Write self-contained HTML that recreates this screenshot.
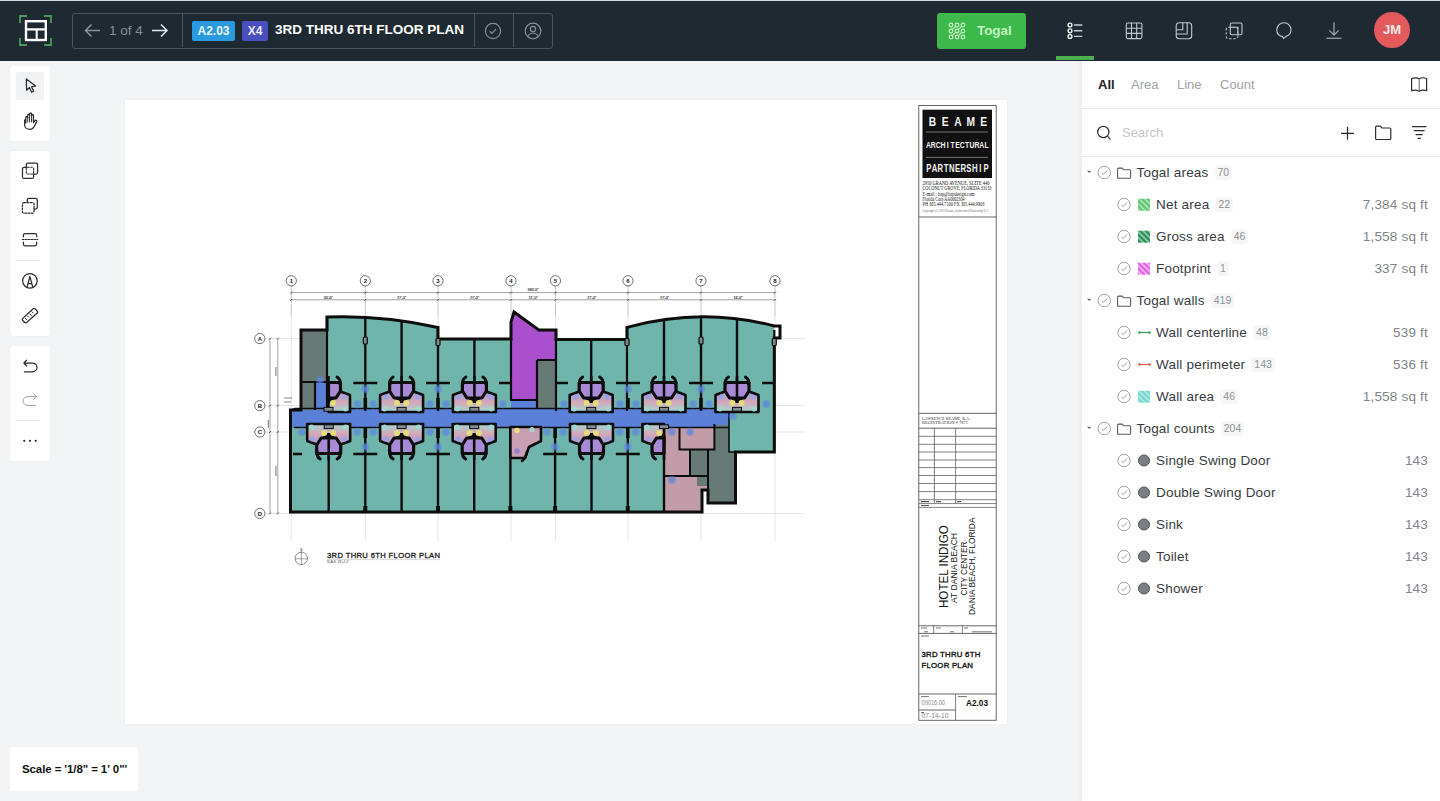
<!DOCTYPE html>
<html><head><meta charset="utf-8">
<style>
*{box-sizing:border-box;margin:0;padding:0}
html,body{width:1440px;height:801px;overflow:hidden;background:#f3f4f6;font-family:"Liberation Sans",sans-serif;position:relative}
.abs{position:absolute}
#top{position:absolute;left:0;top:0;width:1440px;height:61px;background:#1e2931}
#panel{position:absolute;left:1082px;top:61px;width:358px;height:740px;background:#fff;box-shadow:-3px 0 6px rgba(20,30,50,0.035)}
.tb{position:absolute;left:10px;width:40px;background:#fff;border-radius:3px;box-shadow:0 0 2px rgba(0,0,0,0.06)}
#paper{position:absolute;left:125px;top:100px;width:882px;height:624px;background:#fff;box-shadow:0 0 3px rgba(0,0,0,0.04)}
#scale{position:absolute;left:10px;top:747px;width:128px;height:44px;background:#fff;border-radius:3px;font-size:11.5px;font-weight:bold;color:#111;padding:16px 0 0 12px;letter-spacing:-0.1px}
.tab{top:77px;font-size:13px;color:#9ea2a7;line-height:16px}
.pt{position:absolute;font-size:13.5px;letter-spacing:0.2px;color:#383b40;line-height:17px;white-space:nowrap}
.bd{display:inline-block;margin-left:6px;font-size:10.5px;letter-spacing:0;color:#8d9196;background:#f6f6f7;border-radius:4px;padding:0 3px;line-height:15px;vertical-align:1px}
.pv{position:absolute;right:12px;font-size:13.5px;letter-spacing:0.2px;color:#7f8388;line-height:17px;white-space:nowrap}
</style></head><body>
<div id="top"><div class="abs" style="left:0;top:0;width:1440px;height:1px;background:#cfd9e3"></div>
<svg class="abs" style="left:0;top:0" width="70" height="61" viewBox="0 0 70 61">
<g stroke="#4b9a5c" stroke-width="1.8" fill="none">
<path d="M20 23V16H27"/><path d="M44 16H51V23"/><path d="M20 38V45H27"/><path d="M44 45H51V38"/>
</g>
<rect x="26" y="21.2" width="19.8" height="18.8" fill="none" stroke="#fff" stroke-width="2.4"/>
<path d="M27 29.4H44.8M36.7 29V40" stroke="#fff" stroke-width="2.1"/>
</svg>
<div class="abs" style="left:72px;top:13px;width:481px;height:35.5px;border:1px solid #4a5359;border-radius:3px"></div>
<div class="abs" style="left:182px;top:13px;width:1px;height:34px;background:#4a5359"></div>
<div class="abs" style="left:474px;top:13px;width:1px;height:34px;background:#4a5359"></div>
<div class="abs" style="left:513px;top:13px;width:1px;height:34px;background:#4a5359"></div>
<svg class="abs" style="left:84px;top:22px" width="90" height="18" viewBox="0 0 90 18">
<path d="M1.5 8.5H16M7.5 2.5L1.5 8.5L7.5 14.5" stroke="#8c949a" stroke-width="1.5" fill="none"/>
<path d="M68 8.5H83M77 2.5L83 8.5L77 14.5" stroke="#e6e9eb" stroke-width="1.5" fill="none"/>
</svg>
<div class="abs" style="left:109px;top:22px;font-size:13.5px;color:#868e94;line-height:17px">1 of 4</div>
<div class="abs" style="left:192px;top:21px;width:43px;height:20px;background:#2a9ae0;border-radius:2px;color:#e8f4fc;font-size:12px;font-weight:bold;text-align:center;line-height:20px">A2.03</div>
<div class="abs" style="left:242px;top:21px;width:26px;height:20px;background:#4a4fc0;border-radius:2px;color:#e8e8f8;font-size:12px;font-weight:bold;text-align:center;line-height:20px">X4</div>
<div class="abs" style="left:275px;top:20px;font-size:13.5px;font-weight:bold;color:#fff;line-height:20px;letter-spacing:0px">3RD THRU 6TH FLOOR PLAN</div>
<svg class="abs" style="left:483px;top:21px" width="20" height="20" viewBox="0 0 20 20">
<circle cx="10" cy="10" r="7.6" stroke="#878e94" stroke-width="1.2" fill="none"/>
<path d="M6.8 10.2L9 12.3L13.2 7.8" stroke="#878e94" stroke-width="1.2" fill="none"/>
</svg>
<svg class="abs" style="left:523px;top:21px" width="20" height="20" viewBox="0 0 20 20">
<circle cx="10" cy="10" r="7.8" stroke="#878e94" stroke-width="1.2" fill="none"/>
<circle cx="10" cy="8" r="2.6" stroke="#878e94" stroke-width="1.2" fill="none"/>
<path d="M4.8 15.5C6 13 8 12 10 12S14 13 15.2 15.5" stroke="#878e94" stroke-width="1.2" fill="none"/>
</svg>
<div class="abs" style="left:937px;top:13px;width:89px;height:36px;background:#3db84a;border-radius:3px"></div>
<svg class="abs" style="left:947px;top:21px" width="20" height="20" viewBox="0 0 20 20">
<g stroke="#c6f4c8" stroke-width="1.2" fill="none">
<circle cx="4" cy="4" r="1.8"/><circle cx="10" cy="4" r="1.8"/><circle cx="16" cy="4" r="1.8"/>
<circle cx="4" cy="10" r="1.8"/><circle cx="10" cy="10" r="1.8"/><circle cx="16" cy="10" r="1.8"/>
<circle cx="4" cy="16" r="1.8"/><circle cx="10" cy="16" r="1.8"/><circle cx="16" cy="16" r="1.8"/>
<path d="M5.3 8.7L8.7 5.3M11.3 8.7L14.7 5.3M5.3 14.7L8.7 11.3M11.3 14.7L14.7 11.3"/>
</g>
</svg>
<div class="abs" style="left:977px;top:20.5px;font-size:13.4px;font-weight:bold;color:#c2f4c4;line-height:20px">Togal</div>
<svg class="abs" style="left:1062px;top:18px" width="26" height="26" viewBox="1062 18 26 26">
<g stroke="#f2f4f5" stroke-width="1.4" fill="none">
<circle cx="1070" cy="25" r="1.9"/><circle cx="1070" cy="30.8" r="1.9"/><circle cx="1070" cy="36.4" r="1.9"/>
</g>
<path d="M1074 25H1082.3M1074 30.8H1082.3M1074 36.4H1082.3" stroke="#c9cdd0" stroke-width="1.4"/>
</svg>
<div class="abs" style="left:1056px;top:56px;width:38px;height:4px;background:#4caf50"></div>
<svg class="abs" style="left:1120px;top:18px" width="28" height="26" viewBox="1120 18 28 26">
<g stroke="#c4c8cc" stroke-width="1.1" fill="none">
<rect x="1126.3" y="23" width="15.6" height="15.6" rx="1.5"/><path d="M1131.5 23V38.6M1136.7 23V38.6M1126.3 28.2H1141.9M1126.3 33.4H1141.9"/>
</g></svg>
<svg class="abs" style="left:1170px;top:18px" width="28" height="26" viewBox="1170 18 28 26">
<g stroke="#c4c8cc" stroke-width="1.1" fill="none">
<rect x="1176.2" y="22.8" width="15.5" height="16" rx="3"/><path d="M1182.8 22.8V29.7H1176.2M1187.2 22.8V34H1176.2"/>
</g></svg>
<svg class="abs" style="left:1220px;top:18px" width="28" height="26" viewBox="1220 18 28 26">
<g stroke="#c4c8cc" stroke-width="1.1" fill="none">
<rect x="1230.3" y="23" width="11.7" height="11.7" rx="1.5"/><rect x="1226.2" y="27.3" width="11.7" height="11.5" rx="2" stroke-dasharray="2.4 1.8"/><path d="M1230.3 27.3H1237.9V34.7"/>
</g></svg>
<svg class="abs" style="left:1270px;top:18px" width="28" height="26" viewBox="1270 18 28 26">
<path d="M1284 22.8C1288 22.8 1291 25.8 1291 29.8C1291 33 1289 35.5 1286.3 36.3L1283.5 38.5L1282.5 36.6C1279 36 1276.8 33.3 1276.8 29.8C1276.8 25.8 1280 22.8 1284 22.8Z" stroke="#c4c8cc" stroke-width="1.1" fill="none"/>
</svg>
<svg class="abs" style="left:1320px;top:18px" width="28" height="26" viewBox="1320 18 28 26">
<g stroke="#9aa2a7" stroke-width="1.3" fill="none">
<path d="M1334 22.2V35M1329.3 30.4L1334 35L1338.8 30.4"/><path d="M1326.4 38.3H1341.4"/>
</g></svg>
<div class="abs" style="left:1374px;top:12px;width:36px;height:36px;border-radius:50%;background:#e25a5c;color:#fde8e8;font-size:13px;font-weight:bold;text-align:center;line-height:36px">JM</div>
</div>
<div id="paper"></div>
<!--PLAN--><svg class="abs" style="left:125px;top:99px" width="882" height="625" viewBox="125 99 882 625">
<defs>
<linearGradient id="podg" x1="0" y1="0" x2="0" y2="1"><stop offset="0" stop-color="#9c9ee0"/><stop offset="0.5" stop-color="#d6a6b6"/><stop offset="1" stop-color="#a6d6d0"/></linearGradient>
<linearGradient id="podl" x1="0" y1="1" x2="0" y2="0"><stop offset="0" stop-color="#9c9ee0"/><stop offset="0.5" stop-color="#d6a6b6"/><stop offset="1" stop-color="#a6d6d0"/></linearGradient>
<clipPath id="bld"><path d="M301 410V330H327V317Q383 315 438 327.5V339H511V322L514 312L538.8 330H556V339.5H627V327.4Q701 307 774.3 326H780V338H774.3V452H735.5V503H708V490H702V512H290.5V410Z"/></clipPath>
<radialGradient id="bdot"><stop offset="0" stop-color="#5b86e0" stop-opacity="0.95"/><stop offset="0.6" stop-color="#5b86e0" stop-opacity="0.6"/><stop offset="1" stop-color="#5b86e0" stop-opacity="0"/></radialGradient>
</defs>
<path d="M291.3 286V298 M291.3 299V316 M365.3 286V298 M365.3 299V316 M438 286V298 M438 299V316 M511 286V298 M511 299V316 M555.5 286V298 M555.5 299V316 M628 286V298 M628 299V316 M701 286V298 M701 299V316 M775 286V298 M775 299V316" stroke="#888" stroke-width="0.5" fill="none"/>
<path d="M291.3 316V541 M365.3 316V541 M438 316V541 M511 316V541 M555.5 316V541 M628 316V541 M701 316V541 M775 316V541 M265 338.6H805 M265 405.6H805 M265 432H805 M265 513.5H805" stroke="#d4d4d4" stroke-width="0.6" fill="none"/>
<path d="M291.3 292.6H775M291.3 299.8H775M270 338.6V513.5M277.8 338.6V513.5" stroke="#555" stroke-width="0.55" fill="none"/>
<path d="M290.3 293.6L292.3 291.6 M290.3 300.8L292.3 298.8 M364.3 293.6L366.3 291.6 M364.3 300.8L366.3 298.8 M437 293.6L439 291.6 M437 300.8L439 298.8 M510 293.6L512 291.6 M510 300.8L512 298.8 M554.5 293.6L556.5 291.6 M554.5 300.8L556.5 298.8 M627 293.6L629 291.6 M627 300.8L629 298.8 M700 293.6L702 291.6 M700 300.8L702 298.8 M774 293.6L776 291.6 M774 300.8L776 298.8 M269 339.6L271 337.6 M269 406.6L271 404.6 M269 433L271 431 M269 514.5L271 512.5 M276.8 339.6L278.8 337.6 M276.8 406.6L278.8 404.6 M276.8 433L278.8 431 M276.8 514.5L278.8 512.5" stroke="#333" stroke-width="0.8"/>
<text x="328.3" y="298.6" font-size="3.6" text-anchor="middle" font-family="Liberation Sans" fill="#333" stroke="#333" stroke-width="0.15">30'-0&quot;</text>
<text x="401.65" y="298.6" font-size="3.6" text-anchor="middle" font-family="Liberation Sans" fill="#333" stroke="#333" stroke-width="0.15">27'-0&quot;</text>
<text x="474.5" y="298.6" font-size="3.6" text-anchor="middle" font-family="Liberation Sans" fill="#333" stroke="#333" stroke-width="0.15">27'-0&quot;</text>
<text x="533.25" y="298.6" font-size="3.6" text-anchor="middle" font-family="Liberation Sans" fill="#333" stroke="#333" stroke-width="0.15">11'-0&quot;</text>
<text x="591.75" y="298.6" font-size="3.6" text-anchor="middle" font-family="Liberation Sans" fill="#333" stroke="#333" stroke-width="0.15">27'-0&quot;</text>
<text x="664.5" y="298.6" font-size="3.6" text-anchor="middle" font-family="Liberation Sans" fill="#333" stroke="#333" stroke-width="0.15">27'-0&quot;</text>
<text x="738.0" y="298.6" font-size="3.6" text-anchor="middle" font-family="Liberation Sans" fill="#333" stroke="#333" stroke-width="0.15">16'-0&quot;</text>
<text x="533" y="291.4" font-size="3.6" text-anchor="middle" font-family="Liberation Sans" fill="#333" stroke="#333" stroke-width="0.15">380&#39;-0&quot;</text>
<path d="M275.9 367V376M275.9 466V476M268.3 420V428" stroke="#777" stroke-width="1"/>
<circle cx="291.3" cy="280.8" r="5.1" fill="#fff" stroke="#333" stroke-width="0.7"/><text x="291.3" y="283" font-size="6" font-weight="bold" text-anchor="middle" fill="#222" font-family="Liberation Sans">1</text>
<circle cx="365.3" cy="280.8" r="5.1" fill="#fff" stroke="#333" stroke-width="0.7"/><text x="365.3" y="283" font-size="6" font-weight="bold" text-anchor="middle" fill="#222" font-family="Liberation Sans">2</text>
<circle cx="438" cy="280.8" r="5.1" fill="#fff" stroke="#333" stroke-width="0.7"/><text x="438" y="283" font-size="6" font-weight="bold" text-anchor="middle" fill="#222" font-family="Liberation Sans">3</text>
<circle cx="511" cy="280.8" r="5.1" fill="#fff" stroke="#333" stroke-width="0.7"/><text x="511" y="283" font-size="6" font-weight="bold" text-anchor="middle" fill="#222" font-family="Liberation Sans">4</text>
<circle cx="555.5" cy="280.8" r="5.1" fill="#fff" stroke="#333" stroke-width="0.7"/><text x="555.5" y="283" font-size="6" font-weight="bold" text-anchor="middle" fill="#222" font-family="Liberation Sans">5</text>
<circle cx="628" cy="280.8" r="5.1" fill="#fff" stroke="#333" stroke-width="0.7"/><text x="628" y="283" font-size="6" font-weight="bold" text-anchor="middle" fill="#222" font-family="Liberation Sans">6</text>
<circle cx="701" cy="280.8" r="5.1" fill="#fff" stroke="#333" stroke-width="0.7"/><text x="701" y="283" font-size="6" font-weight="bold" text-anchor="middle" fill="#222" font-family="Liberation Sans">7</text>
<circle cx="775" cy="280.8" r="5.1" fill="#fff" stroke="#333" stroke-width="0.7"/><text x="775" y="283" font-size="6" font-weight="bold" text-anchor="middle" fill="#222" font-family="Liberation Sans">8</text>
<circle cx="259.8" cy="338.6" r="5.1" fill="#fff" stroke="#333" stroke-width="0.7"/><text x="259.8" y="340.8" font-size="6" font-weight="bold" text-anchor="middle" fill="#222" font-family="Liberation Sans">A</text>
<circle cx="259.8" cy="405.6" r="5.1" fill="#fff" stroke="#333" stroke-width="0.7"/><text x="259.8" y="407.8" font-size="6" font-weight="bold" text-anchor="middle" fill="#222" font-family="Liberation Sans">B</text>
<circle cx="259.8" cy="432" r="5.1" fill="#fff" stroke="#333" stroke-width="0.7"/><text x="259.8" y="434.2" font-size="6" font-weight="bold" text-anchor="middle" fill="#222" font-family="Liberation Sans">C</text>
<circle cx="259.8" cy="513.5" r="5.1" fill="#fff" stroke="#333" stroke-width="0.7"/><text x="259.8" y="515.7" font-size="6" font-weight="bold" text-anchor="middle" fill="#222" font-family="Liberation Sans">D</text>
<path d="M284 398H292M284 402H291" stroke="#888" stroke-width="1.2"/>
<path d="M327 411V317Q383 315 438 327.5V339H511V411Z" fill="#70b5ab"/>
<path d="M556 411V339.5H627V327.4Q701 307 774.3 326V411Z" fill="#70b5ab"/>
<rect x="729" y="409" width="45.5" height="43" fill="#70b5ab"/>
<rect x="292" y="427" width="372" height="85" fill="#70b5ab"/>
<rect x="292" y="408" width="437" height="20" fill="#5a80d8"/>
<rect x="315" y="382" width="12" height="30" fill="#5a80d8"/>
<rect x="301" y="330" width="26" height="52" fill="#687a76"/><rect x="301" y="382" width="14" height="28" fill="#687a76"/>
<path d="M511 400V322L514 312L538.8 330H556V360H537V400Z" fill="#aa4fce"/>
<rect x="511" y="399" width="45" height="12" fill="#5a80d8"/><rect x="537" y="360" width="19" height="48" fill="#687a76"/>
<path d="M664 427H714.4V449.5H708V490H702V512H664Z" fill="#c39ca9"/>
<path d="M714.4 425H729V452H735.5V503H708V449.5H714.4Z" fill="#687a76"/>
<rect x="690" y="449.5" width="18" height="26.5" fill="#687a76"/><rect x="697" y="476" width="11" height="10" fill="#687a76"/>
<path d="M301 410V330H327V317Q383 315 438 327.5V339H511V322L514 312L538.8 330H556V339.5H627V327.4Q701 307 774.3 326H780V338H774.3V452H735.5V503H708V490H702V512H290.5V410Z" fill="none" stroke="#0d0d0d" stroke-width="3" stroke-linejoin="miter"/>
<path d="M327 317V411M301 382H327M315 382V410M511 339V400H537M537 360H556M537 360V408M556 330V411M627 327.4V411M774.3 330V452" stroke="#0d0d0d" stroke-width="2.2" fill="none"/>
<path d="M294 408.5H729M294 427.5H729M729 408V452H774.3" stroke="#0d0d0d" stroke-width="1.6" fill="none"/>
<path clip-path="url(#bld)" d="M365.3 310V411 M401.6 310V411 M438 310V411 M474.4 310V411 M591.2 310V411 M664 310V411 M701 310V411 M737 310V411" stroke="#0d0d0d" stroke-width="2.4" fill="none"/>
<path d="M328.7 427V512 M365.3 427V512 M401.6 427V512 M438 427V512 M474.2 427V512 M510.4 427V512 M555.1 427V512 M591.5 427V512 M627.8 427V512 M664 427V512" stroke="#0d0d0d" stroke-width="2.4" fill="none"/>
<path d="M679.5 427V449.5H714.4V427M664 476H690M690 449.5V476H708M708 449.5V503M714.4 424V449.5" stroke="#0d0d0d" stroke-width="2" fill="none"/>
<path d="M353.3 383H377.3 M426 383H450 M616 383H640 M689 383H713 M499 383H511 M556 383H568 M762 383H774" stroke="#0d0d0d" stroke-width="2.4" fill="none"/>
<path d="M353.3 454H377.3 M426 454H450 M543.1 454H567.1 M615.8 454H639.8 M293 454H302" stroke="#0d0d0d" stroke-width="2.4" fill="none"/>
<circle cx="357.3" cy="404" r="5" fill="url(#bdot)"/>
<circle cx="373.3" cy="404" r="5" fill="url(#bdot)"/>
<circle cx="365.3" cy="389" r="5" fill="url(#bdot)"/>
<circle cx="430" cy="404" r="5" fill="url(#bdot)"/>
<circle cx="446" cy="404" r="5" fill="url(#bdot)"/>
<circle cx="438" cy="389" r="5" fill="url(#bdot)"/>
<circle cx="620" cy="404" r="5" fill="url(#bdot)"/>
<circle cx="636" cy="404" r="5" fill="url(#bdot)"/>
<circle cx="628" cy="389" r="5" fill="url(#bdot)"/>
<circle cx="693" cy="404" r="5" fill="url(#bdot)"/>
<circle cx="709" cy="404" r="5" fill="url(#bdot)"/>
<circle cx="701" cy="389" r="5" fill="url(#bdot)"/>
<circle cx="357.3" cy="432" r="5" fill="url(#bdot)"/>
<circle cx="373.3" cy="432" r="5" fill="url(#bdot)"/>
<circle cx="365.3" cy="447" r="5" fill="url(#bdot)"/>
<circle cx="430" cy="432" r="5" fill="url(#bdot)"/>
<circle cx="446" cy="432" r="5" fill="url(#bdot)"/>
<circle cx="438" cy="447" r="5" fill="url(#bdot)"/>
<circle cx="547.1" cy="432" r="5" fill="url(#bdot)"/>
<circle cx="563.1" cy="432" r="5" fill="url(#bdot)"/>
<circle cx="555.1" cy="447" r="5" fill="url(#bdot)"/>
<circle cx="619.8" cy="432" r="5" fill="url(#bdot)"/>
<circle cx="635.8" cy="432" r="5" fill="url(#bdot)"/>
<circle cx="627.8" cy="447" r="5" fill="url(#bdot)"/>
<circle cx="564" cy="404" r="5" fill="url(#bdot)"/>
<circle cx="503" cy="404" r="5" fill="url(#bdot)"/>
<circle cx="766.3" cy="404" r="5" fill="url(#bdot)"/>
<circle cx="302" cy="432" r="5" fill="url(#bdot)"/>
<circle cx="672" cy="432" r="5" fill="url(#bdot)"/>
<circle cx="690" cy="432" r="5" fill="url(#bdot)"/>
<circle cx="672" cy="480" r="5" fill="url(#bdot)"/>
<circle cx="320" cy="380" r="5" fill="url(#bdot)"/>
<circle cx="733" cy="416" r="5" fill="url(#bdot)"/>
<path d="M365.3 398V408.5 M438 398V408.5 M628 398V408.5 M701 398V408.5 M365.3 427.5V438 M438 427.5V438 M555.1 427.5V438 M627.8 427.5V438" stroke="#0d0d0d" stroke-width="3.6" fill="none"/>
<rect x="363.3" y="337.0" width="4" height="7" rx="1" fill="#7d8a88" stroke="#0d0d0d" stroke-width="1.2"/>
<rect x="436" y="338.5" width="4" height="7" rx="1" fill="#7d8a88" stroke="#0d0d0d" stroke-width="1.2"/>
<rect x="625" y="338.5" width="4" height="7" rx="1" fill="#7d8a88" stroke="#0d0d0d" stroke-width="1.2"/>
<rect x="699" y="337.0" width="4" height="7" rx="1" fill="#7d8a88" stroke="#0d0d0d" stroke-width="1.2"/>
<rect x="772.3" y="338.5" width="4" height="7" rx="1" fill="#7d8a88" stroke="#0d0d0d" stroke-width="1.2"/>
<rect x="363.3" y="506" width="4" height="5" fill="#0d0d0d"/>
<rect x="436" y="506" width="4" height="5" fill="#0d0d0d"/>
<rect x="508.4" y="506" width="4" height="5" fill="#0d0d0d"/>
<rect x="553.1" y="506" width="4" height="5" fill="#0d0d0d"/>
<rect x="625.8" y="506" width="4" height="5" fill="#0d0d0d"/>
<polygon points="380.1,412 380.1,395 389.6,391.5 413.6,391.5 423.1,395 423.1,412" fill="url(#podg)" stroke="#0d0d0d" stroke-width="2.6" stroke-linejoin="round"/><circle cx="384.6" cy="408.8" r="2.6" fill="#9fd8d2"/><circle cx="385.6" cy="397" r="2.6" fill="#9aa2e4" opacity="0.8"/><circle cx="418.6" cy="408.8" r="2.6" fill="#9fd8d2"/><circle cx="417.6" cy="397" r="2.6" fill="#9aa2e4" opacity="0.8"/><polygon points="389.6,382.5 389.6,391 394.1,398 409.1,398 413.6,391 413.6,382.5" fill="#a98ad6" stroke="#0d0d0d" stroke-width="3.2" stroke-linejoin="round"/><polygon points="395.6,398 398.3,403 404.90000000000003,403 407.6,398" fill="#0d0d0d"/><circle cx="397.1" cy="403" r="3" fill="#e6dc7a"/><path d="M390.1 384Q389.1 379.5 393.1 377" stroke="#0d0d0d" stroke-width="3" fill="none" stroke-linecap="round"/><circle cx="406.1" cy="403" r="3" fill="#e6dc7a"/><path d="M413.1 384Q414.1 379.5 410.1 377" stroke="#0d0d0d" stroke-width="3" fill="none" stroke-linecap="round"/><rect x="397.1" y="407.4" width="9" height="3.8" fill="#858c94" stroke="#0d0d0d" stroke-width="1"/><path d="M401.6 401V376" stroke="#0d0d0d" stroke-width="2.6"/>
<polygon points="452.9,412 452.9,395 462.4,391.5 486.4,391.5 495.9,395 495.9,412" fill="url(#podg)" stroke="#0d0d0d" stroke-width="2.6" stroke-linejoin="round"/><circle cx="457.4" cy="408.8" r="2.6" fill="#9fd8d2"/><circle cx="458.4" cy="397" r="2.6" fill="#9aa2e4" opacity="0.8"/><circle cx="491.4" cy="408.8" r="2.6" fill="#9fd8d2"/><circle cx="490.4" cy="397" r="2.6" fill="#9aa2e4" opacity="0.8"/><polygon points="462.4,382.5 462.4,391 466.9,398 481.9,398 486.4,391 486.4,382.5" fill="#a98ad6" stroke="#0d0d0d" stroke-width="3.2" stroke-linejoin="round"/><polygon points="468.4,398 471.09999999999997,403 477.7,403 480.4,398" fill="#0d0d0d"/><circle cx="469.9" cy="403" r="3" fill="#e6dc7a"/><path d="M462.9 384Q461.9 379.5 465.9 377" stroke="#0d0d0d" stroke-width="3" fill="none" stroke-linecap="round"/><circle cx="478.9" cy="403" r="3" fill="#e6dc7a"/><path d="M485.9 384Q486.9 379.5 482.9 377" stroke="#0d0d0d" stroke-width="3" fill="none" stroke-linecap="round"/><rect x="469.9" y="407.4" width="9" height="3.8" fill="#858c94" stroke="#0d0d0d" stroke-width="1"/><path d="M474.4 401V376" stroke="#0d0d0d" stroke-width="2.6"/>
<polygon points="569.7,412 569.7,395 579.2,391.5 603.2,391.5 612.7,395 612.7,412" fill="url(#podg)" stroke="#0d0d0d" stroke-width="2.6" stroke-linejoin="round"/><circle cx="574.2" cy="408.8" r="2.6" fill="#9fd8d2"/><circle cx="575.2" cy="397" r="2.6" fill="#9aa2e4" opacity="0.8"/><circle cx="608.2" cy="408.8" r="2.6" fill="#9fd8d2"/><circle cx="607.2" cy="397" r="2.6" fill="#9aa2e4" opacity="0.8"/><polygon points="579.2,382.5 579.2,391 583.7,398 598.7,398 603.2,391 603.2,382.5" fill="#a98ad6" stroke="#0d0d0d" stroke-width="3.2" stroke-linejoin="round"/><polygon points="585.2,398 587.9000000000001,403 594.5,403 597.2,398" fill="#0d0d0d"/><circle cx="586.7" cy="403" r="3" fill="#e6dc7a"/><path d="M579.7 384Q578.7 379.5 582.7 377" stroke="#0d0d0d" stroke-width="3" fill="none" stroke-linecap="round"/><circle cx="595.7" cy="403" r="3" fill="#e6dc7a"/><path d="M602.7 384Q603.7 379.5 599.7 377" stroke="#0d0d0d" stroke-width="3" fill="none" stroke-linecap="round"/><rect x="586.7" y="407.4" width="9" height="3.8" fill="#858c94" stroke="#0d0d0d" stroke-width="1"/><path d="M591.2 401V376" stroke="#0d0d0d" stroke-width="2.6"/>
<polygon points="642.5,412 642.5,395 652,391.5 676,391.5 685.5,395 685.5,412" fill="url(#podg)" stroke="#0d0d0d" stroke-width="2.6" stroke-linejoin="round"/><circle cx="647" cy="408.8" r="2.6" fill="#9fd8d2"/><circle cx="648" cy="397" r="2.6" fill="#9aa2e4" opacity="0.8"/><circle cx="681" cy="408.8" r="2.6" fill="#9fd8d2"/><circle cx="680" cy="397" r="2.6" fill="#9aa2e4" opacity="0.8"/><polygon points="652,382.5 652,391 656.5,398 671.5,398 676,391 676,382.5" fill="#a98ad6" stroke="#0d0d0d" stroke-width="3.2" stroke-linejoin="round"/><polygon points="658,398 660.7,403 667.3,403 670,398" fill="#0d0d0d"/><circle cx="659.5" cy="403" r="3" fill="#e6dc7a"/><path d="M652.5 384Q651.5 379.5 655.5 377" stroke="#0d0d0d" stroke-width="3" fill="none" stroke-linecap="round"/><circle cx="668.5" cy="403" r="3" fill="#e6dc7a"/><path d="M675.5 384Q676.5 379.5 672.5 377" stroke="#0d0d0d" stroke-width="3" fill="none" stroke-linecap="round"/><rect x="659.5" y="407.4" width="9" height="3.8" fill="#858c94" stroke="#0d0d0d" stroke-width="1"/><path d="M664 401V376" stroke="#0d0d0d" stroke-width="2.6"/>
<polygon points="715.5,412 715.5,395 725,391.5 749,391.5 758.5,395 758.5,412" fill="url(#podg)" stroke="#0d0d0d" stroke-width="2.6" stroke-linejoin="round"/><circle cx="720" cy="408.8" r="2.6" fill="#9fd8d2"/><circle cx="721" cy="397" r="2.6" fill="#9aa2e4" opacity="0.8"/><circle cx="754" cy="408.8" r="2.6" fill="#9fd8d2"/><circle cx="753" cy="397" r="2.6" fill="#9aa2e4" opacity="0.8"/><polygon points="725,382.5 725,391 729.5,398 744.5,398 749,391 749,382.5" fill="#a98ad6" stroke="#0d0d0d" stroke-width="3.2" stroke-linejoin="round"/><polygon points="731,398 733.7,403 740.3,403 743,398" fill="#0d0d0d"/><circle cx="732.5" cy="403" r="3" fill="#e6dc7a"/><path d="M725.5 384Q724.5 379.5 728.5 377" stroke="#0d0d0d" stroke-width="3" fill="none" stroke-linecap="round"/><circle cx="741.5" cy="403" r="3" fill="#e6dc7a"/><path d="M748.5 384Q749.5 379.5 745.5 377" stroke="#0d0d0d" stroke-width="3" fill="none" stroke-linecap="round"/><rect x="732.5" y="407.4" width="9" height="3.8" fill="#858c94" stroke="#0d0d0d" stroke-width="1"/><path d="M737 401V376" stroke="#0d0d0d" stroke-width="2.6"/>
<polygon points="328.5,412 328.5,391 340.5,391.5 350.0,395 350.0,412" fill="url(#podg)" stroke="#0d0d0d" stroke-width="2.6" stroke-linejoin="round"/><circle cx="345.5" cy="408.8" r="2.6" fill="#9fd8d2"/><circle cx="344.5" cy="397" r="2.6" fill="#9aa2e4" opacity="0.8"/><polygon points="328.5,382.5 328.5,398 336.0,398 340.5,391 340.5,382.5" fill="#a98ad6" stroke="#0d0d0d" stroke-width="3.2" stroke-linejoin="round"/><polygon points="328.5,398 328.5,403 331.8,403 334.5,398" fill="#0d0d0d"/><circle cx="333.0" cy="403" r="3" fill="#e6dc7a"/><path d="M340.0 384Q341.0 379.5 337.0 377" stroke="#0d0d0d" stroke-width="3" fill="none" stroke-linecap="round"/><rect x="324.0" y="407.4" width="9" height="3.8" fill="#858c94" stroke="#0d0d0d" stroke-width="1"/><path d="M328.5 401V376" stroke="#0d0d0d" stroke-width="2.6"/>
<polygon points="307.2,424 307.2,441 316.7,444.5 340.7,444.5 350.2,441 350.2,424" fill="url(#podl)" stroke="#0d0d0d" stroke-width="2.6" stroke-linejoin="round"/><circle cx="311.7" cy="427.2" r="2.6" fill="#9fd8d2"/><circle cx="312.7" cy="439" r="2.6" fill="#9aa2e4" opacity="0.8"/><circle cx="345.7" cy="427.2" r="2.6" fill="#9fd8d2"/><circle cx="344.7" cy="439" r="2.6" fill="#9aa2e4" opacity="0.8"/><polygon points="316.7,453.5 316.7,445 321.2,438 336.2,438 340.7,445 340.7,453.5" fill="#a98ad6" stroke="#0d0d0d" stroke-width="3.2" stroke-linejoin="round"/><polygon points="322.7,438 325.4,433 332.0,433 334.7,438" fill="#0d0d0d"/><circle cx="324.2" cy="433" r="3" fill="#e6dc7a"/><path d="M317.2 452Q316.2 456.5 320.2 459" stroke="#0d0d0d" stroke-width="3" fill="none" stroke-linecap="round"/><circle cx="333.2" cy="433" r="3" fill="#e6dc7a"/><path d="M340.2 452Q341.2 456.5 337.2 459" stroke="#0d0d0d" stroke-width="3" fill="none" stroke-linecap="round"/><rect x="324.2" y="424.8" width="9" height="3.8" fill="#858c94" stroke="#0d0d0d" stroke-width="1"/><path d="M328.7 435V460" stroke="#0d0d0d" stroke-width="2.6"/>
<polygon points="380.1,424 380.1,441 389.6,444.5 413.6,444.5 423.1,441 423.1,424" fill="url(#podl)" stroke="#0d0d0d" stroke-width="2.6" stroke-linejoin="round"/><circle cx="384.6" cy="427.2" r="2.6" fill="#9fd8d2"/><circle cx="385.6" cy="439" r="2.6" fill="#9aa2e4" opacity="0.8"/><circle cx="418.6" cy="427.2" r="2.6" fill="#9fd8d2"/><circle cx="417.6" cy="439" r="2.6" fill="#9aa2e4" opacity="0.8"/><polygon points="389.6,453.5 389.6,445 394.1,438 409.1,438 413.6,445 413.6,453.5" fill="#a98ad6" stroke="#0d0d0d" stroke-width="3.2" stroke-linejoin="round"/><polygon points="395.6,438 398.3,433 404.90000000000003,433 407.6,438" fill="#0d0d0d"/><circle cx="397.1" cy="433" r="3" fill="#e6dc7a"/><path d="M390.1 452Q389.1 456.5 393.1 459" stroke="#0d0d0d" stroke-width="3" fill="none" stroke-linecap="round"/><circle cx="406.1" cy="433" r="3" fill="#e6dc7a"/><path d="M413.1 452Q414.1 456.5 410.1 459" stroke="#0d0d0d" stroke-width="3" fill="none" stroke-linecap="round"/><rect x="397.1" y="424.8" width="9" height="3.8" fill="#858c94" stroke="#0d0d0d" stroke-width="1"/><path d="M401.6 435V460" stroke="#0d0d0d" stroke-width="2.6"/>
<polygon points="452.7,424 452.7,441 462.2,444.5 486.2,444.5 495.7,441 495.7,424" fill="url(#podl)" stroke="#0d0d0d" stroke-width="2.6" stroke-linejoin="round"/><circle cx="457.2" cy="427.2" r="2.6" fill="#9fd8d2"/><circle cx="458.2" cy="439" r="2.6" fill="#9aa2e4" opacity="0.8"/><circle cx="491.2" cy="427.2" r="2.6" fill="#9fd8d2"/><circle cx="490.2" cy="439" r="2.6" fill="#9aa2e4" opacity="0.8"/><polygon points="462.2,453.5 462.2,445 466.7,438 481.7,438 486.2,445 486.2,453.5" fill="#a98ad6" stroke="#0d0d0d" stroke-width="3.2" stroke-linejoin="round"/><polygon points="468.2,438 470.9,433 477.5,433 480.2,438" fill="#0d0d0d"/><circle cx="469.7" cy="433" r="3" fill="#e6dc7a"/><path d="M462.7 452Q461.7 456.5 465.7 459" stroke="#0d0d0d" stroke-width="3" fill="none" stroke-linecap="round"/><circle cx="478.7" cy="433" r="3" fill="#e6dc7a"/><path d="M485.7 452Q486.7 456.5 482.7 459" stroke="#0d0d0d" stroke-width="3" fill="none" stroke-linecap="round"/><rect x="469.7" y="424.8" width="9" height="3.8" fill="#858c94" stroke="#0d0d0d" stroke-width="1"/><path d="M474.2 435V460" stroke="#0d0d0d" stroke-width="2.6"/>
<polygon points="570.0,424 570.0,441 579.5,444.5 603.5,444.5 613.0,441 613.0,424" fill="url(#podl)" stroke="#0d0d0d" stroke-width="2.6" stroke-linejoin="round"/><circle cx="574.5" cy="427.2" r="2.6" fill="#9fd8d2"/><circle cx="575.5" cy="439" r="2.6" fill="#9aa2e4" opacity="0.8"/><circle cx="608.5" cy="427.2" r="2.6" fill="#9fd8d2"/><circle cx="607.5" cy="439" r="2.6" fill="#9aa2e4" opacity="0.8"/><polygon points="579.5,453.5 579.5,445 584.0,438 599.0,438 603.5,445 603.5,453.5" fill="#a98ad6" stroke="#0d0d0d" stroke-width="3.2" stroke-linejoin="round"/><polygon points="585.5,438 588.2,433 594.8,433 597.5,438" fill="#0d0d0d"/><circle cx="587.0" cy="433" r="3" fill="#e6dc7a"/><path d="M580.0 452Q579.0 456.5 583.0 459" stroke="#0d0d0d" stroke-width="3" fill="none" stroke-linecap="round"/><circle cx="596.0" cy="433" r="3" fill="#e6dc7a"/><path d="M603.0 452Q604.0 456.5 600.0 459" stroke="#0d0d0d" stroke-width="3" fill="none" stroke-linecap="round"/><rect x="587.0" y="424.8" width="9" height="3.8" fill="#858c94" stroke="#0d0d0d" stroke-width="1"/><path d="M591.5 435V460" stroke="#0d0d0d" stroke-width="2.6"/>
<polygon points="510.4,427 541,427 541,441 529,447 525,458 510.4,458" fill="#c8a0b4" stroke="#0d0d0d" stroke-width="2.6" stroke-linejoin="round"/>
<circle cx="517" cy="430.5" r="2.8" fill="#e6dc7a"/><circle cx="532" cy="429.5" r="2.6" fill="#9fd8d2"/><circle cx="517" cy="451" r="2.8" fill="#9a7ed6"/>
<path d="M527 452Q526 458 522 461" stroke="#0d0d0d" stroke-width="2.6" fill="none" stroke-linecap="round"/>
<polygon points="642.5,424 642.5,441 652,444.5 664,445 664,424" fill="url(#podl)" stroke="#0d0d0d" stroke-width="2.6" stroke-linejoin="round"/><circle cx="647" cy="427.2" r="2.6" fill="#9fd8d2"/><circle cx="648" cy="439" r="2.6" fill="#9aa2e4" opacity="0.8"/><polygon points="652,453.5 652,445 656.5,438 664,438 664,453.5" fill="#a98ad6" stroke="#0d0d0d" stroke-width="3.2" stroke-linejoin="round"/><polygon points="658,438 660.7,433 664.0,433 664,438" fill="#0d0d0d"/><circle cx="659.5" cy="433" r="3" fill="#e6dc7a"/><path d="M652.5 452Q651.5 456.5 655.5 459" stroke="#0d0d0d" stroke-width="3" fill="none" stroke-linecap="round"/><rect x="659.5" y="424.8" width="9" height="3.8" fill="#858c94" stroke="#0d0d0d" stroke-width="1"/><path d="M664 435V460" stroke="#0d0d0d" stroke-width="2.6"/>
<circle cx="301.3" cy="558.4" r="6.2" fill="none" stroke="#444" stroke-width="0.6"/><path d="M301.3 550V565.5M295 558.8H307.5" stroke="#444" stroke-width="0.5"/><text x="301.3" y="550.5" font-size="3" text-anchor="middle" font-family="Liberation Sans" fill="#333">N</text>
<text x="327" y="558.2" font-size="7.6" font-family="Liberation Sans" fill="#1a1a1a" stroke="#1a1a1a" stroke-width="0.3" textLength="113" lengthAdjust="spacing">3RD THRU 6TH FLOOR PLAN</text>
<path d="M326.5 559.6H440" stroke="#999" stroke-width="0.4"/>
<text x="327" y="562.6" font-size="3.4" font-family="Liberation Sans" fill="#333" textLength="22" lengthAdjust="spacingAndGlyphs">SCALE: 1/8&quot;=1&#39;-0&quot;</text>
</svg><!--/PLAN-->
<!--TITLE--><svg class="abs" style="left:910px;top:100px" width="92" height="625" viewBox="910 100 92 625">
<rect x="918.8" y="105.5" width="77.4" height="614.8" fill="none" stroke="#555" stroke-width="0.9"/>
<rect x="922.5" y="109.7" width="69.5" height="68.3" fill="#111"/>
<path d="M926 132H988M926 157.4H988" stroke="#bbb" stroke-width="0.6"/>
<text transform="translate(926 125.7) scale(0.8 1)" x="8.00 24.00 40.00 56.00 72.00" y="0" text-anchor="middle" font-size="12.8" font-weight="bold" fill="#f4f4f4" font-family="Liberation Sans">BEAME</text>
<text transform="translate(926 148) scale(0.7 1)" x="3.46 10.38 17.31 24.23 31.15 38.08 45.00 51.92 58.85 65.77 72.69 79.62 86.54" y="0" text-anchor="middle" font-size="9.8" font-weight="bold" fill="#f4f4f4" font-family="Liberation Sans">ARCHITECTURAL</text>
<text transform="translate(926 171.8) scale(0.72 1)" x="3.98 11.93 19.89 27.84 35.80 43.75 51.70 59.66 67.61 75.57 83.52" y="0" text-anchor="middle" font-size="10.7" font-weight="bold" fill="#f4f4f4" font-family="Liberation Sans">PARTNERSHIP</text>
<text x="922.5" y="185" font-size="5.3" fill="#111" font-family="Liberation Serif" textLength="67" lengthAdjust="spacingAndGlyphs">2950 GRAND AVENUE, SUITE 440</text>
<text x="922.5" y="190.2" font-size="5.3" fill="#111" font-family="Liberation Serif" textLength="69" lengthAdjust="spacingAndGlyphs">COCONUT GROVE, FLORIDA 33133</text>
<text x="922.5" y="195.6" font-size="5.3" fill="#111" font-family="Liberation Serif" textLength="52" lengthAdjust="spacingAndGlyphs">E-mail : bap@bapdesign.com</text>
<text x="922.5" y="200.7" font-size="5.3" fill="#111" font-family="Liberation Serif" textLength="42" lengthAdjust="spacingAndGlyphs">Florida Corp AA0002304</text>
<text x="922.5" y="205.8" font-size="5.3" fill="#111" font-family="Liberation Serif" textLength="62" lengthAdjust="spacingAndGlyphs">PH 305.444.7100   FX 305.444.9903</text>
<text x="922.5" y="212" font-size="3.2" fill="#666" font-family="Liberation Serif" textLength="66" lengthAdjust="spacingAndGlyphs">Copyright (C) 2010 Beame Architectural Partnership P.A.</text>
<path d="M918.8 217H996.2M918.8 413.3H996.2M918.8 428.2H996.2" stroke="#555" stroke-width="0.9"/>
<text x="922" y="419.6" font-size="4.4" fill="#333" font-family="Liberation Serif" textLength="48" lengthAdjust="spacingAndGlyphs">LAWRENCE BEAME, R.A.</text>
<text x="922" y="424" font-size="4.4" fill="#333" font-family="Liberation Serif" textLength="46" lengthAdjust="spacingAndGlyphs">REGISTRATION # 7871</text>
<path d="M918.8 436.3H996.2 M918.8 444.3H996.2 M918.8 452H996.2 M918.8 460H996.2 M918.8 467.6H996.2 M918.8 475.5H996.2 M918.8 483.5H996.2 M918.8 491.6H996.2 M918.8 499.7H996.2 M918.8 503.6H996.2 M918.8 507.4H996.2" stroke="#555" stroke-width="0.75"/>
<path d="M934.4 428.2V503.6M955.6 428.2V503.6" stroke="#555" stroke-width="0.75"/>
<path d="M921 501.6H929M936 501.6H941M957 501.6H961M921 505.5H929" stroke="#555" stroke-width="1.1"/>
<g font-family="Liberation Sans" fill="#151515">
<text transform="translate(947.8 608) rotate(-90)" font-size="12.6" textLength="82.7" lengthAdjust="spacingAndGlyphs">HOTEL INDIGO</text>
<text transform="translate(957.4 603) rotate(-90)" font-size="8.6" textLength="70" lengthAdjust="spacingAndGlyphs">AT DANIA BEACH</text>
<text transform="translate(966.7 595.5) rotate(-90)" font-size="8.6" textLength="53.8" lengthAdjust="spacingAndGlyphs">CITY CENTER</text>
<text transform="translate(974.6 615) rotate(-90)" font-size="8.6" textLength="97.5" lengthAdjust="spacingAndGlyphs">DANIA BEACH, FLORIDA</text>
</g>
<path d="M918.8 625.8H996.2M918.8 633.4H996.2M918.8 694H996.2M918.8 710H955.6" stroke="#555" stroke-width="0.9"/>
<path d="M933.7 625.8V633.4M962.4 625.8V633.4M955.6 694V720.3" stroke="#555" stroke-width="0.75"/>
<path d="M921 628H927M936 628H941M964 628H968M924 631.8H928M950 631.8H954M972 631.8H992M921 636H929M921 696.6H929M958 696.6H967M921 712.5H924" stroke="#666" stroke-width="0.9"/>
<text x="921.5" y="657" font-size="7.8" fill="#111" stroke="#111" stroke-width="0.35" font-family="Liberation Sans" textLength="58.8" lengthAdjust="spacing">3RD THRU 6TH</text>
<text x="921.5" y="667.8" font-size="7.8" fill="#111" stroke="#111" stroke-width="0.35" font-family="Liberation Sans" textLength="51.5" lengthAdjust="spacing">FLOOR PLAN</text>
<text x="921.5" y="705.2" font-size="6.5" fill="#888" font-family="Liberation Sans" textLength="23.5" lengthAdjust="spacingAndGlyphs">09016.00</text>
<text x="966" y="706" font-size="8.8" font-weight="bold" fill="#111" font-family="Liberation Sans" textLength="22" lengthAdjust="spacingAndGlyphs">A2.03</text>
<text x="921.5" y="718.4" font-size="6.5" fill="#888" font-family="Liberation Sans" textLength="27" lengthAdjust="spacingAndGlyphs">07-14-10</text>
</svg><!--/TITLE-->
<div id="panel">
<div class="abs" style="left:0;top:47px;width:358px;height:1px;background:#e9eaec"></div>
<div class="abs" style="left:0;top:95px;width:358px;height:1px;background:#e9eaec"></div>
</div>
<div class="abs tab" style="left:1098px;color:#1d2025;font-weight:bold">All</div>
<div class="abs tab" style="left:1131px">Area</div>
<div class="abs tab" style="left:1177px">Line</div>
<div class="abs tab" style="left:1220px">Count</div>
<svg class="abs" style="left:1082px;top:61px" width="358" height="100" viewBox="1082 61 358 100">
<g stroke="#2a2d31" stroke-width="1.2" fill="none" stroke-linejoin="round">
<path d="M1411.6 78.5C1414 77.6 1417 77.6 1419.2 78.8C1421.4 77.6 1424.4 77.6 1426.6 78.5V90.6C1424.4 89.9 1421.4 89.9 1419.2 91.2C1417 89.9 1414 89.9 1411.6 90.6Z"/>
<path d="M1419.2 78.8V91" stroke="#777"/>
<circle cx="1103.3" cy="132" r="5.6"/><path d="M1107.4 136.2L1110.6 139.4"/>
<path d="M1341 133.3H1354M1347.5 126.8V139.8"/>
<path d="M1375.6 127.2C1375.6 126.6 1376 126.2 1376.6 126.2H1380.3L1382 128H1389.8C1390.4 128 1390.8 128.4 1390.8 129V138.5C1390.8 139.1 1390.4 139.5 1389.8 139.5H1376.6C1376 139.5 1375.6 139.1 1375.6 138.5Z"/>
<path d="M1412 126.6H1426.4M1413.8 130.6H1424.6M1415.6 134.6H1422.8M1417.6 138.4H1420.8"/>
</g>
</svg>
<div class="abs" style="left:1122px;top:125px;font-size:13px;color:#c3c6ca;line-height:16px">Search</div>
<svg class="abs" style="left:1082px;top:61px" width="358" height="560" viewBox="1082 61 358 560">
<defs>
<pattern id="stN" width="4" height="4" patternUnits="userSpaceOnUse" patternTransform="rotate(-45)"><rect width="4" height="4" fill="#5fc46f"/><rect width="1.8" height="4" fill="#a6e6ae"/></pattern>
<pattern id="stG" width="4" height="4" patternUnits="userSpaceOnUse" patternTransform="rotate(-45)"><rect width="4" height="4" fill="#2f8a5c"/><rect width="1.8" height="4" fill="#8cd0a8"/></pattern>
<pattern id="stF" width="4" height="4" patternUnits="userSpaceOnUse" patternTransform="rotate(-45)"><rect width="4" height="4" fill="#e45fe0"/><rect width="1.8" height="4" fill="#f6b4f4"/></pattern>
<pattern id="stW" width="4" height="4" patternUnits="userSpaceOnUse" patternTransform="rotate(-45)"><rect width="4" height="4" fill="#72d6cc"/><rect width="1.8" height="4" fill="#aeebe5"/></pattern>
</defs>
<path d="M1087 170.7H1091.4L1089.2 173.1Z" fill="#6b6f74"/>
<g transform="translate(1117 167.5)" stroke="#55595e" stroke-width="1.1" fill="none"><path d="M0.6 1.6C0.6 1 1 0.6 1.6 0.6H5L6.5 2.2H12.6C13.2 2.2 13.6 2.6 13.6 3.2V9.8C13.6 10.4 13.2 10.8 12.6 10.8H1.6C1 10.8 0.6 10.4 0.6 9.8Z"/></g>
<circle cx="1104.2" cy="172.5" r="6.2" stroke="#9da1a5" stroke-width="1" fill="none"/><path d="M1101.6000000000001 172.7L1103.4 174.5L1107.0 170.7" stroke="#9da1a5" stroke-width="1" fill="none"/>
<rect x="1138" y="198.7" width="12" height="12" fill="url(#stN)"/>
<circle cx="1124" cy="204.5" r="6.2" stroke="#9da1a5" stroke-width="1" fill="none"/><path d="M1121.4 204.7L1123.2 206.5L1126.8 202.7" stroke="#9da1a5" stroke-width="1" fill="none"/>
<rect x="1138" y="230.7" width="12" height="12" fill="url(#stG)"/>
<circle cx="1124" cy="236.5" r="6.2" stroke="#9da1a5" stroke-width="1" fill="none"/><path d="M1121.4 236.7L1123.2 238.5L1126.8 234.7" stroke="#9da1a5" stroke-width="1" fill="none"/>
<rect x="1138" y="262.7" width="12" height="12" fill="url(#stF)"/>
<circle cx="1124" cy="268.5" r="6.2" stroke="#9da1a5" stroke-width="1" fill="none"/><path d="M1121.4 268.7L1123.2 270.5L1126.8 266.7" stroke="#9da1a5" stroke-width="1" fill="none"/>
<path d="M1087 298.7H1091.4L1089.2 301.1Z" fill="#6b6f74"/>
<g transform="translate(1117 295.5)" stroke="#55595e" stroke-width="1.1" fill="none"><path d="M0.6 1.6C0.6 1 1 0.6 1.6 0.6H5L6.5 2.2H12.6C13.2 2.2 13.6 2.6 13.6 3.2V9.8C13.6 10.4 13.2 10.8 12.6 10.8H1.6C1 10.8 0.6 10.4 0.6 9.8Z"/></g>
<circle cx="1104.2" cy="300.5" r="6.2" stroke="#9da1a5" stroke-width="1" fill="none"/><path d="M1101.6000000000001 300.7L1103.4 302.5L1107.0 298.7" stroke="#9da1a5" stroke-width="1" fill="none"/>
<path d="M1139 332.5H1150" stroke="#3a9a5a" stroke-width="1.2"/><circle cx="1139.5" cy="332.5" r="1.3" fill="#3a9a5a"/><circle cx="1149.5" cy="332.5" r="1.3" fill="#3a9a5a"/>
<circle cx="1124" cy="332.5" r="6.2" stroke="#9da1a5" stroke-width="1" fill="none"/><path d="M1121.4 332.7L1123.2 334.5L1126.8 330.7" stroke="#9da1a5" stroke-width="1" fill="none"/>
<path d="M1139 364.5H1150" stroke="#d9534f" stroke-width="1.2"/><circle cx="1139.5" cy="364.5" r="1.3" fill="#d9534f"/><circle cx="1149.5" cy="364.5" r="1.3" fill="#d9534f"/>
<circle cx="1124" cy="364.5" r="6.2" stroke="#9da1a5" stroke-width="1" fill="none"/><path d="M1121.4 364.7L1123.2 366.5L1126.8 362.7" stroke="#9da1a5" stroke-width="1" fill="none"/>
<rect x="1138" y="390.7" width="12" height="12" fill="url(#stW)"/>
<circle cx="1124" cy="396.5" r="6.2" stroke="#9da1a5" stroke-width="1" fill="none"/><path d="M1121.4 396.7L1123.2 398.5L1126.8 394.7" stroke="#9da1a5" stroke-width="1" fill="none"/>
<path d="M1087 426.7H1091.4L1089.2 429.1Z" fill="#6b6f74"/>
<g transform="translate(1117 423.5)" stroke="#55595e" stroke-width="1.1" fill="none"><path d="M0.6 1.6C0.6 1 1 0.6 1.6 0.6H5L6.5 2.2H12.6C13.2 2.2 13.6 2.6 13.6 3.2V9.8C13.6 10.4 13.2 10.8 12.6 10.8H1.6C1 10.8 0.6 10.4 0.6 9.8Z"/></g>
<circle cx="1104.2" cy="428.5" r="6.2" stroke="#9da1a5" stroke-width="1" fill="none"/><path d="M1101.6000000000001 428.7L1103.4 430.5L1107.0 426.7" stroke="#9da1a5" stroke-width="1" fill="none"/>
<circle cx="1144" cy="460.5" r="5.5" fill="#7c7f83" stroke="#55585c" stroke-width="1"/>
<circle cx="1124" cy="460.5" r="6.2" stroke="#9da1a5" stroke-width="1" fill="none"/><path d="M1121.4 460.7L1123.2 462.5L1126.8 458.7" stroke="#9da1a5" stroke-width="1" fill="none"/>
<circle cx="1144" cy="492.5" r="5.5" fill="#7c7f83" stroke="#55585c" stroke-width="1"/>
<circle cx="1124" cy="492.5" r="6.2" stroke="#9da1a5" stroke-width="1" fill="none"/><path d="M1121.4 492.7L1123.2 494.5L1126.8 490.7" stroke="#9da1a5" stroke-width="1" fill="none"/>
<circle cx="1144" cy="524.5" r="5.5" fill="#7c7f83" stroke="#55585c" stroke-width="1"/>
<circle cx="1124" cy="524.5" r="6.2" stroke="#9da1a5" stroke-width="1" fill="none"/><path d="M1121.4 524.7L1123.2 526.5L1126.8 522.7" stroke="#9da1a5" stroke-width="1" fill="none"/>
<circle cx="1144" cy="556.5" r="5.5" fill="#7c7f83" stroke="#55585c" stroke-width="1"/>
<circle cx="1124" cy="556.5" r="6.2" stroke="#9da1a5" stroke-width="1" fill="none"/><path d="M1121.4 556.7L1123.2 558.5L1126.8 554.7" stroke="#9da1a5" stroke-width="1" fill="none"/>
<circle cx="1144" cy="588.5" r="5.5" fill="#7c7f83" stroke="#55585c" stroke-width="1"/>
<circle cx="1124" cy="588.5" r="6.2" stroke="#9da1a5" stroke-width="1" fill="none"/><path d="M1121.4 588.7L1123.2 590.5L1126.8 586.7" stroke="#9da1a5" stroke-width="1" fill="none"/>
</svg>
<div class="pt" style="left:1136.5px;top:164.0px">Togal areas<span class="bd">70</span></div>
<div class="pt" style="left:1156px;top:196.0px">Net area<span class="bd">22</span></div>
<div class="pv" style="top:196.0px">7,384 sq ft</div>
<div class="pt" style="left:1156px;top:228.0px">Gross area<span class="bd">46</span></div>
<div class="pv" style="top:228.0px">1,558 sq ft</div>
<div class="pt" style="left:1156px;top:260.0px">Footprint<span class="bd">1</span></div>
<div class="pv" style="top:260.0px">337 sq ft</div>
<div class="pt" style="left:1136.5px;top:292.0px">Togal walls<span class="bd">419</span></div>
<div class="pt" style="left:1156px;top:324.0px">Wall centerline<span class="bd">48</span></div>
<div class="pv" style="top:324.0px">539 ft</div>
<div class="pt" style="left:1156px;top:356.0px">Wall perimeter<span class="bd">143</span></div>
<div class="pv" style="top:356.0px">536 ft</div>
<div class="pt" style="left:1156px;top:388.0px">Wall area<span class="bd">46</span></div>
<div class="pv" style="top:388.0px">1,558 sq ft</div>
<div class="pt" style="left:1136.5px;top:420.0px">Togal counts<span class="bd">204</span></div>
<div class="pt" style="left:1156px;top:452.0px">Single Swing Door</div>
<div class="pv" style="top:452.0px">143</div>
<div class="pt" style="left:1156px;top:484.0px">Double Swing Door</div>
<div class="pv" style="top:484.0px">143</div>
<div class="pt" style="left:1156px;top:516.0px">Sink</div>
<div class="pv" style="top:516.0px">143</div>
<div class="pt" style="left:1156px;top:548.0px">Toilet</div>
<div class="pv" style="top:548.0px">143</div>
<div class="pt" style="left:1156px;top:580.0px">Shower</div>
<div class="pv" style="top:580.0px">143</div>
<div class="tb" style="top:66px;height:75px"></div>
<div class="tb" style="top:151px;height:185px"></div>
<div class="tb" style="top:346px;height:115px"></div>
<div class="abs" style="left:16px;top:72px;width:28px;height:28px;background:#f1f2f4;border-radius:2px"></div>
<div class="abs" style="left:16px;top:260px;width:24px;height:1px;background:#e6e7ea"></div>
<div class="abs" style="left:16px;top:420px;width:24px;height:1px;background:#e6e7ea"></div>
<svg class="abs" style="left:10px;top:66px" width="40" height="400" viewBox="10 66 40 400">
<g stroke="#2a2d31" stroke-width="1.25" fill="none" stroke-linejoin="round" stroke-linecap="round">
<path d="M26.3 79L26.6 90.2L29.5 87.5L31.6 92.3L33.6 91.3L31.6 86.7L35.6 86.1Z"/>
<path d="M25.8 123V117.5C25.8 116.4 27.7 116.4 27.7 117.5V115.2C27.7 114.1 29.6 114.1 29.6 115.2V114C29.6 112.9 31.6 112.9 31.6 114V115.5C31.6 114.4 33.5 114.4 33.5 115.5V122.6L34.9 120.7C35.6 119.8 37.2 120.5 36.7 121.6L34.2 126.5C33.2 128.4 31.5 129.4 29.5 129.4C26.9 129.4 24.6 127.5 24.6 124.8V120.5C24.6 119.4 25.8 119.4 25.8 120.5"/>
<path d="M27.7 117.5V122M29.6 115.2V122M31.6 114V122" stroke-width="1"/>
<path d="M26.3 167.3V164.5Q26.3 163 27.8 163H36.1Q37.6 163 37.6 164.5V172.5Q37.6 174 36.1 174H33.6"/>
<path d="M26.3 167.3H24Q22.5 167.3 22.5 168.8V176.9Q22.5 178.4 24 178.4H32.1Q33.6 178.4 33.6 176.9V174"/>
<rect x="26.3" y="167.3" width="7.3" height="6.7" rx="1.3" stroke-dasharray="1.7 1.4" stroke-width="1.1"/>
<path d="M27.2 202.5V200C27.2 199 28 198.4 29 198.4H35.5C36.5 198.4 37.3 199.2 37.3 200.2V207.2C37.3 208.2 36.5 209 35.5 209H34"/>
<rect x="22.4" y="202.6" width="11.6" height="10.6" rx="1.5" stroke-dasharray="1.8 1.5"/>
<path d="M23.4 236.8V235.3C23.4 234.3 24.2 233.5 25.2 233.5H34.9C35.9 233.5 36.7 234.3 36.7 235.3V236.8M23.4 242V244C23.4 245 24.2 245.8 25.2 245.8H34.9C35.9 245.8 36.7 245 36.7 244V242"/>
<path d="M22.2 239.5H37.8" stroke-dasharray="1.8 1.2" stroke-width="1.1"/>
<circle cx="29.9" cy="280.8" r="7.3"/>
<path d="M27.2 286.7L29.9 276.5L32.6 286.7M28.1 283.5H31.7"/>
<path d="M22.8 318.4L33.2 308.8C33.8 308.2 34.5 308.2 35 308.7L37.3 311.3C37.8 311.8 37.8 312.5 37.2 313L26.6 322.5C26 323 25.3 323 24.8 322.5L22.6 320.2C22.2 319.7 22.2 318.9 22.8 318.4Z"/>
<path d="M25.2 318.2L26.6 319.6M27.5 316L28.5 317M29.8 314L31.2 315.4M32.1 311.9L33.1 312.9" stroke-width="1"/>
<path d="M26.5 360.2L23.9 363L26.5 365.8M24.2 363H32C34.8 363 37 364.9 37 367.4C37 369.9 34.8 371.8 32 371.8H24.4"/>
</g>
<path d="M33.6 393.8L36.2 396.6L33.6 399.4M35.9 396.6H28C25.2 396.6 23 398.5 23 401C23 403.5 25.2 405.4 28 405.4H35.6" stroke="#9b9fa4" stroke-width="1" fill="none" stroke-linecap="round" stroke-linejoin="round"/>
<g fill="#2a2d31"><circle cx="24.3" cy="440.8" r="1.1"/><circle cx="30" cy="440.8" r="1.1"/><circle cx="35.7" cy="440.8" r="1.1"/></g>
</svg>
<div id="scale">Scale = '1/8" = 1' 0"'</div>
</body></html>
